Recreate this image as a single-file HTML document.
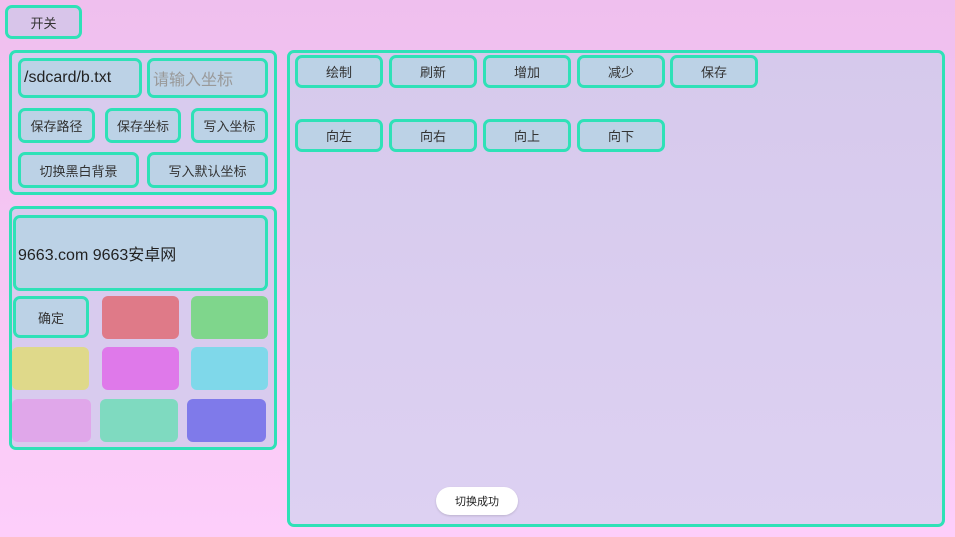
<!DOCTYPE html>
<html><head><meta charset="utf-8"><style>
*{box-sizing:border-box;margin:0;padding:0}
body{width:955px;height:537px;overflow:hidden;position:relative;background:linear-gradient(180deg,#efbfee,#fdcefa);font-family:"Liberation Sans","Noto Sans CJK SC",sans-serif;color:#222}
.a{position:absolute}
.p{position:absolute;border:3px solid #2fe1b7;border-radius:7px;background:#d8cbee}
.b{position:absolute;border:3px solid #2fe1b7;border-radius:7px;background:#bcd2e6;display:flex;align-items:center;justify-content:center;font-size:13px;color:#333}
.c{position:absolute;border-radius:6px}
</style></head><body>
<div class="b" style="left:5px;top:5px;width:77px;height:34px;background:#d8c5ea">开关</div>
<div class="p" style="left:9px;top:50px;width:268px;height:145px"></div>
<div class="b" style="left:18px;top:58px;width:124px;height:40px;justify-content:flex-start;padding-left:3px;font-size:16px;color:#222">/sdcard/b.txt</div>
<div class="b" style="left:147px;top:58px;width:121px;height:40px;justify-content:flex-start;padding-left:3px;font-size:16px;color:#999">请输入坐标</div>
<div class="b" style="left:18px;top:108px;width:77px;height:35px">保存路径</div>
<div class="b" style="left:105px;top:108px;width:76px;height:35px">保存坐标</div>
<div class="b" style="left:191px;top:108px;width:77px;height:35px">写入坐标</div>
<div class="b" style="left:18px;top:152px;width:121px;height:36px">切换黑白背景</div>
<div class="b" style="left:147px;top:152px;width:121px;height:36px">写入默认坐标</div>
<div class="p" style="left:9px;top:206px;width:268px;height:244px"></div>
<div class="b" style="left:13px;top:215px;width:255px;height:76px;justify-content:flex-start;padding-left:2px;font-size:16px;color:#222">9663.com 9663安卓网</div>
<div class="b" style="left:13px;top:296px;width:76px;height:42px">确定</div>
<div class="c" style="left:102px;top:296px;width:77px;height:43px;background:#df7a88"></div>
<div class="c" style="left:191px;top:296px;width:77px;height:43px;background:#7fd68c"></div>
<div class="c" style="left:12px;top:347px;width:77px;height:43px;background:#dfd98a"></div>
<div class="c" style="left:102px;top:347px;width:77px;height:43px;background:#df79ea"></div>
<div class="c" style="left:191px;top:347px;width:77px;height:43px;background:#7fd8ea"></div>
<div class="c" style="left:12px;top:399px;width:79px;height:43px;background:#e0a7ea"></div>
<div class="c" style="left:100px;top:399px;width:78px;height:43px;background:#7fdac0"></div>
<div class="c" style="left:187px;top:399px;width:79px;height:43px;background:#7f7aea"></div>
<div class="p" style="left:287px;top:50px;width:658px;height:477px;background:linear-gradient(180deg,#d6c9ec,#ddd1f2)"></div>
<div class="b" style="left:295px;top:55px;width:88px;height:33px">绘制</div>
<div class="b" style="left:389px;top:55px;width:88px;height:33px">刷新</div>
<div class="b" style="left:483px;top:55px;width:88px;height:33px">增加</div>
<div class="b" style="left:577px;top:55px;width:88px;height:33px">减少</div>
<div class="b" style="left:670px;top:55px;width:88px;height:33px">保存</div>
<div class="b" style="left:295px;top:119px;width:88px;height:33px">向左</div>
<div class="b" style="left:389px;top:119px;width:88px;height:33px">向右</div>
<div class="b" style="left:483px;top:119px;width:88px;height:33px">向上</div>
<div class="b" style="left:577px;top:119px;width:88px;height:33px">向下</div>
<div class="a" style="left:436px;top:487px;width:82px;height:28px;border-radius:14px;background:#fff;box-shadow:0 1px 2px rgba(0,0,0,.15);display:flex;align-items:center;justify-content:center;font-size:11px;color:#222">切换成功</div>
</body></html>
